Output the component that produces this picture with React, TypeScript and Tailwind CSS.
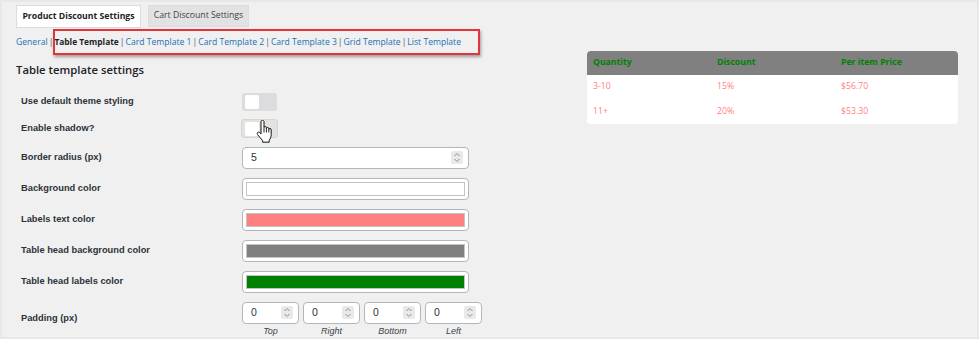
import React from "react";

const sans = { fontFamily: '"Open Sans", "Noto Sans", sans-serif' };
const arial = { fontFamily: '"Liberation Sans", Arial, sans-serif' };

function Spinner() {
  return (
    <div className="w-[12px] h-[13px] bg-[#e9e9ea] rounded-[2px] flex items-center justify-center">
      <svg width="8" height="11" viewBox="0 0 8 11" fill="none" stroke="#8c8f94" strokeWidth="1">
        <path d="M1.5 4 L4 1.5 L6.5 4" />
        <path d="M1.5 7 L4 9.5 L6.5 7" />
      </svg>
    </div>
  );
}

function Toggle({ hover }: { hover?: boolean }) {
  return (
    <div
      className={
        hover
          ? "w-[37px] h-[19px] rounded-[3px] bg-[#e4e1de] border border-[#d8d4d0] flex items-center pl-[3px]"
          : "w-[35px] h-[18px] rounded-[3px] bg-[#dcdcde] flex items-center pl-[3px]"
      }
    >
      <div className="w-[14px] h-[14px] bg-white rounded-[2px]" />
    </div>
  );
}

function HandCursor() {
  return (
    <svg className="absolute left-[15px] top-[0px]" width="17" height="23" viewBox="0 0 17 23">
      <path
        d="M5 1.8 C5 0.9 5.6 0.3 6.5 0.3 C7.4 0.3 8 0.9 8 1.8 V7.6 C8 6.9 8.5 6.5 9.2 6.5 C9.9 6.5 10.4 6.9 10.4 7.6 V8.6 C10.4 7.9 10.9 7.5 11.6 7.5 C12.3 7.5 12.8 7.9 12.8 8.6 V9.6 C12.8 8.9 13.3 8.5 14 8.5 C14.7 8.5 15.2 8.9 15.2 9.6 V14.5 C15.2 17 14.2 19 13.2 20.3 V22.2 H6.6 V20.5 C5.2 19 3.2 16.6 1.6 14.6 C0.9 13.6 1.2 12.6 2 12.3 C2.8 12 3.6 12.4 4.2 13.1 L5 14 Z"
        fill="#ffffff"
        stroke="#111111"
        strokeWidth="1"
        strokeLinejoin="round"
      />
      <path d="M8 8 V12.5 M10.4 8.6 V12.5 M12.8 9.6 V12.5" stroke="#111111" strokeWidth="0.9" />
    </svg>
  );
}

function NumberBox({ value, w }: { value: string; w: string }) {
  return (
    <div
      className={`${w} h-[22px] bg-white border border-[#b4b6ba] rounded-[4px] flex items-center justify-between pl-[8px] pr-[5px]`}
    >
      <span className="text-[10.5px] text-[#2c3338]" style={arial}>
        {value}
      </span>
      <Spinner />
    </div>
  );
}

function ColorBox({ color }: { color: string }) {
  return (
    <div className="w-[227px] h-[22px] bg-white border border-[#b4b6ba] rounded-[4px] p-[3px]">
      <div className="w-full h-full border border-[#c3c4c7]" style={{ backgroundColor: color }} />
    </div>
  );
}

function Row({ label, children }: { label: string; children: React.ReactNode }) {
  return (
    <div className="flex items-center">
      <div className="w-[226px] pl-[5px] text-[9.3px] font-bold text-[#2c3338]" style={arial}>
        {label}
      </div>
      {children}
    </div>
  );
}

function Sep() {
  return <span className="text-[#50575e] mx-[1px]">|</span>;
}

export default function App() {
  const links = ["Card Template 1", "Card Template 2", "Card Template 3", "Grid Template", "List Template"];
  return (
    <div className="w-[979px] h-[339px] bg-[#e8e8e9] p-[2px] overflow-hidden">
      <div className="w-full h-full bg-[#f0f0f1] flex">
        {/* Left column */}
        <div className="w-[571px] pl-[14px] pt-[3px]">
          {/* Tabs */}
          <div className="flex items-start gap-[7px] whitespace-nowrap" style={sans}>
            <div className="h-[23px] w-[125px] bg-white border border-[#dcdcde] flex items-center justify-center text-[8.7px] font-bold text-[#1d2327]">
              Product Discount Settings
            </div>
            <div className="h-[22px] w-[101px] bg-[#e2e2e3] border border-[#dcdcde] flex items-center justify-center text-[8.7px] text-[#3c434a]">
              Cart Discount Settings
            </div>
          </div>
          {/* Sub nav */}
          <div
            className="relative mt-[4px] h-[20px] flex items-center text-[8.6px] text-[#2271b1] whitespace-pre"
            style={sans}
          >
            <span>General</span>
            <Sep />
            <span className="font-bold text-[8.4px] text-[#1d2327]">Table Template</span>
            {links.map((l) => (
              <React.Fragment key={l}>
                <Sep />
                <span>{l}</span>
              </React.Fragment>
            ))}
            <div className="absolute left-[37px] top-[-3px] w-[427px] h-[26px] border-2 border-[#e0353b] shadow-[1px_2px_3px_rgba(0,0,0,0.35)] pointer-events-none" />
          </div>
          {/* Heading */}
          <div className="mt-[10px] text-[11.3px] font-semibold text-[#1d2327]" style={sans}>
            Table template settings
          </div>
          {/* Form */}
          <div className="mt-[14px] flex flex-col gap-[9px]">
            <Row label="Use default theme styling">
              <Toggle />
            </Row>
            <Row label="Enable shadow?">
              <div className="relative -ml-[1px] h-[18px] flex items-center">
                <Toggle hover />
                <HandCursor />
              </div>
            </Row>
            <Row label="Border radius (px)">
              <NumberBox value="5" w="w-[227px]" />
            </Row>
            <Row label="Background color">
              <ColorBox color="#ffffff" />
            </Row>
            <Row label="Labels text color">
              <ColorBox color="#ff8080" />
            </Row>
            <Row label="Table head background color">
              <ColorBox color="#808080" />
            </Row>
            <Row label="Table head labels color">
              <ColorBox color="#008000" />
            </Row>
            <Row label="Padding (px)">
              <div className="flex gap-[4px]">
                {["Top", "Right", "Bottom", "Left"].map((s) => (
                  <div key={s} className="flex flex-col items-center">
                    <NumberBox value="0" w="w-[57px]" />
                    <span className="mt-[1px] text-[9px] italic text-[#3c434a] leading-[12px]" style={arial}>
                      {s}
                    </span>
                  </div>
                ))}
              </div>
            </Row>
          </div>
        </div>
        {/* Right column */}
        <div className="pl-[14px] pt-[49px]" style={sans}>
          <div className="w-[371px] rounded-[4px] overflow-hidden bg-white">
            <div className="grid grid-cols-[124px_124px_123px] h-[24px] items-center bg-[#808080] text-[8.7px] font-bold text-[#008000]">
              <span className="pl-[6px]">Quantity</span>
              <span className="pl-[6px]">Discount</span>
              <span className="pl-[6px]">Per item Price</span>
            </div>
            <div className="grid grid-cols-[124px_124px_123px] h-[24px] items-center text-[8.7px] text-[#ff8080]">
              <span className="pl-[6px]">3-10</span>
              <span className="pl-[6px]">15%</span>
              <span className="pl-[6px]">$56.70</span>
            </div>
            <div className="grid grid-cols-[124px_124px_123px] h-[25px] items-center text-[8.7px] text-[#ff8080]">
              <span className="pl-[6px]">11+</span>
              <span className="pl-[6px]">20%</span>
              <span className="pl-[6px]">$53.30</span>
            </div>
          </div>
        </div>
      </div>
    </div>
  );
}
